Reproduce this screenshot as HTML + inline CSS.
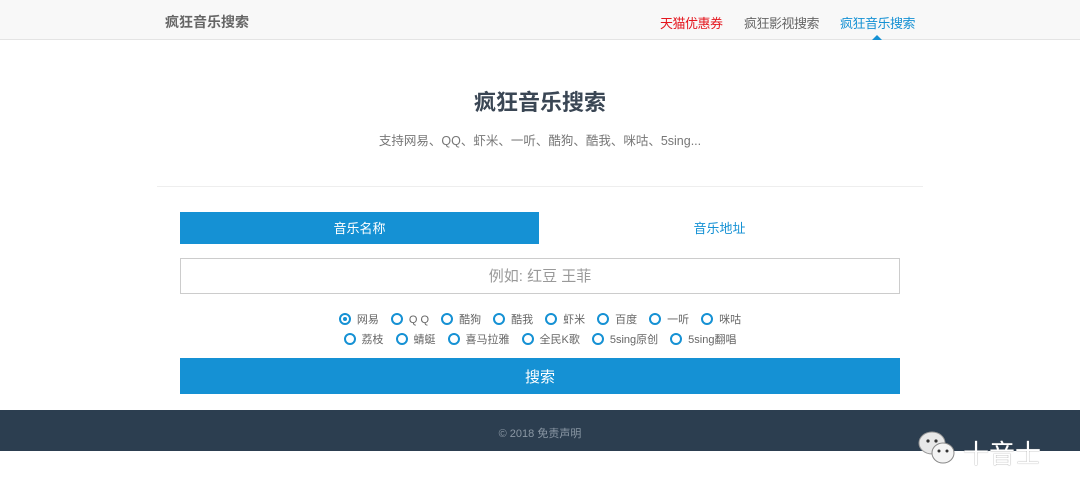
<!DOCTYPE html>
<html><head><meta charset="utf-8"><style>
*{margin:0;padding:0;box-sizing:border-box}
body{width:1080px;height:499px;background:#fff;font-family:"Liberation Sans","Noto Sans CJK SC",sans-serif;position:relative;overflow:hidden}
.nav{position:absolute;left:0;top:0;width:1080px;height:40px;background:#f8f8f8;border-bottom:1px solid #e4e4e4}
.abs{position:absolute;white-space:nowrap}
.r{display:inline-block;width:12px;height:12px;border:2px solid #1591d4;border-radius:50%;vertical-align:-2px;margin-right:6px;position:relative}
.r.on::after{content:"";position:absolute;left:2px;top:2px;width:4px;height:4px;background:#1591d4;border-radius:50%}
.opts{position:absolute;left:0;width:1080px;text-align:center;font-size:11px;color:#666}
.opts span{margin:0 6px}
</style></head><body>
<div class="nav"></div>
<div class="abs" style="left:165px;top:12px;font-size:14px;font-weight:bold;color:#666">疯狂音乐搜索</div>
<div class="abs" style="left:660px;top:13px;font-size:13px;color:#e4161e;letter-spacing:-0.5px">天猫优惠券</div>
<div class="abs" style="left:744px;top:13px;font-size:13px;color:#666;letter-spacing:-0.5px">疯狂影视搜索</div>
<div class="abs" style="left:840px;top:13px;font-size:13px;color:#1591d4;letter-spacing:-0.5px">疯狂音乐搜索</div>
<div class="abs" style="left:872px;top:35px;width:0;height:0;border-left:5px solid transparent;border-right:5px solid transparent;border-bottom:5px solid #1591d4"></div>
<div class="abs" style="left:0;width:1080px;top:85px;text-align:center;font-size:22px;font-weight:bold;color:#3a4654">疯狂音乐搜索</div>
<div class="abs" style="left:0;width:1080px;top:130px;text-align:center;font-size:12.5px;color:#777">支持网易、QQ、虾米、一听、酷狗、酷我、咪咕、5sing...</div>
<div class="abs" style="left:157px;top:186px;width:766px;height:1px;background:#eee"></div>
<div class="abs" style="left:180px;top:212px;width:359px;height:32px;background:#1591d4;color:#fff;font-size:13px;text-align:center;line-height:33px">音乐名称</div>
<div class="abs" style="left:539px;top:212px;width:361px;height:32px;color:#1591d4;font-size:13px;text-align:center;line-height:33px">音乐地址</div>
<div class="abs" style="left:180px;top:258px;width:720px;height:36px;border:1px solid #ccc;text-align:center;line-height:36px;font-size:15px;color:#999">例如: 红豆 王菲</div>
<div class="opts" style="top:311px"><span><i class="r on"></i>网易</span><span><i class="r"></i>Q Q</span><span><i class="r"></i>酷狗</span><span><i class="r"></i>酷我</span><span><i class="r"></i>虾米</span><span><i class="r"></i>百度</span><span><i class="r"></i>一听</span><span><i class="r"></i>咪咕</span></div>
<div class="opts" style="top:331px"><span><i class="r"></i>荔枝</span><span><i class="r"></i>蜻蜓</span><span><i class="r"></i>喜马拉雅</span><span><i class="r"></i>全民K歌</span><span><i class="r"></i>5sing原创</span><span><i class="r"></i>5sing翻唱</span></div>
<div class="abs" style="left:180px;top:358px;width:720px;height:36px;background:#1591d4;color:#fff;font-size:15px;text-align:center;line-height:39px">搜索</div>
<div class="abs" style="left:0;top:410px;width:1080px;height:41px;background:#2c3e50"></div>
<div class="abs" style="left:0;width:1080px;top:425px;text-align:center;font-size:11px;color:#8a97a4">© 2018 免责声明</div>
<svg class="abs" style="left:917px;top:430px" width="46" height="38" viewBox="0 0 46 38"><ellipse cx="15" cy="13" rx="13" ry="11" fill="#e8e8e8" stroke="#999"/><circle cx="11" cy="11" r="1.6" fill="#333"/><circle cx="19" cy="11" r="1.6" fill="#333"/><ellipse cx="26" cy="23" rx="11" ry="10" fill="#f4f4f4" stroke="#888"/><circle cx="22" cy="21" r="1.5" fill="#333"/><circle cx="30" cy="21" r="1.5" fill="#333"/></svg>
<div class="abs" style="left:963px;top:434px;font-size:26px;color:#fff;text-shadow:0 0 1px #666">十音士</div>
</body></html>
